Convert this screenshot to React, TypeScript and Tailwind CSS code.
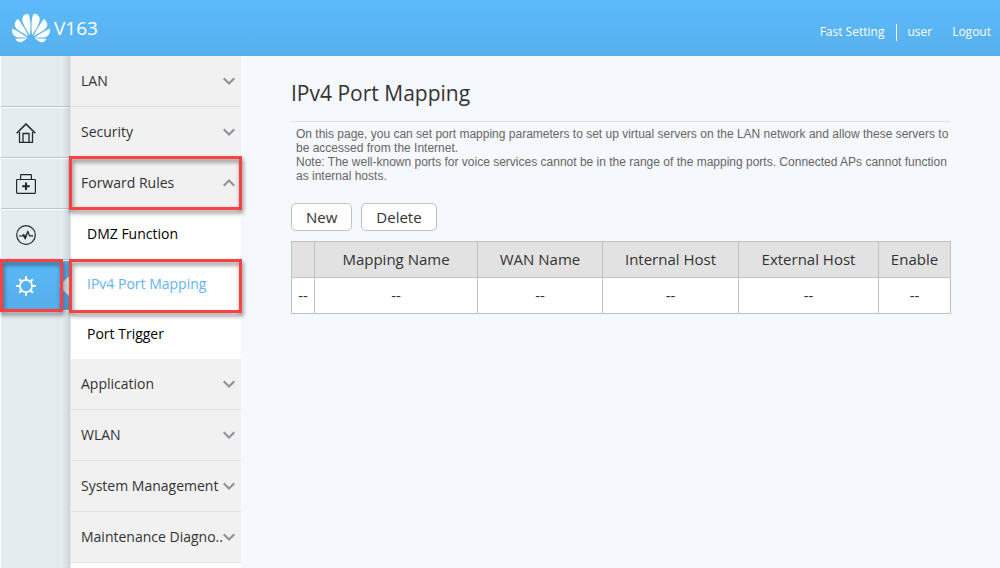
import { useState } from "react";
import type { ReactNode } from "react";
import { SiHuawei } from "react-icons/si";

interface MenuItem {
  label: string;
  marked?: boolean;
  children?: { label: string; marked?: boolean }[];
}

const menu: MenuItem[] = [
  { label: "LAN" },
  { label: "Security" },
  {
    label: "Forward Rules",
    marked: true,
    children: [
      { label: "DMZ Function" },
      { label: "IPv4 Port Mapping", marked: true },
      { label: "Port Trigger" },
    ],
  },
  { label: "Application" },
  { label: "WLAN" },
  { label: "System Management" },
  { label: "Maintenance Diagno.." },
];

const columns = [
  { label: "", width: "w-[23px]" },
  { label: "Mapping Name", width: "w-[163px]" },
  { label: "WAN Name", width: "w-[125px]" },
  { label: "Internal Host", width: "w-[136px]" },
  { label: "External Host", width: "w-[140px]" },
  { label: "Enable", width: "w-[72px]" },
];

const HomeIcon = () => (
  <svg width="20" height="20" viewBox="0 0 20 20" fill="none" stroke="currentColor" strokeWidth="1.3">
    <path d="M.7 10.2 10 1l9.300 9.200" strokeWidth="1.600" />
    <path d="M3.500 9v10.300h13V9M7 19.300v-8.800h6v8.800" />
  </svg>
);

const KitIcon = () => (
  <svg width="20" height="20" viewBox="0 0 20 20" fill="none" stroke="currentColor" strokeWidth="1.2">
    <rect x=".6" y="5.500" width="18.800" height="13.900" rx=".8" />
    <path d="M4.600 5.500V1.300q0-.7.7-.7h9.400q.7 0 .7.700v4.200" />
    <path d="M10 8.500v7.600M6.200 12.300h7.600" strokeWidth="2" />
  </svg>
);

const PulseIcon = () => (
  <svg width="20" height="20" viewBox="0 0 20 20" fill="none" stroke="currentColor" strokeWidth="1.2">
    <circle cx="10" cy="10" r="9.300" />
    <path d="M2.800 11h3.400l1.600-1.500 1.400 3.700 2.600-7 1.700 4.600h3.700" strokeLinejoin="round" />
    <path d="M7.400 10.300l1.800 3 1.600-4.300" strokeWidth="1.500" />
  </svg>
);

const GearIcon = () => (
  <svg width="20" height="20" viewBox="0 0 20 20" fill="none" stroke="currentColor" strokeWidth="1.800">
    <circle cx="10" cy="10" r="6.100" />
    <path
      d="M10 .2v3.600M10 16.200v3.600M.2 10h3.600M16.200 10h3.600M3.200 3.200l2.300 2.300M14.500 14.500l2.300 2.300M3.200 16.800l2.300-2.300M14.500 5.500l2.300-2.300"
      strokeWidth="2"
    />
  </svg>
);

const Chevron = ({ up }: { up: boolean }) => (
  <svg width="12" height="8" viewBox="0 0 12 8" fill="none" stroke="#8c929b" strokeWidth="2" className="shrink-0">
    <path d={up ? "M.7 6.800 6 1.500l5.300 5.300" : "M.7 1.200 6 6.500l5.300-5.300"} />
  </svg>
);

const Mark = ({ className }: { className: string }) => (
  <span
    className={`pointer-events-none absolute z-20 border-3 border-[#fb4141] drop-shadow-[1px_3px_2px_rgba(0,0,0,0.5)] ${className}`}
  />
);

const RailLink = ({ label, children }: { label: string; children: ReactNode }) => (
  <a
    href="#"
    aria-label={label}
    className="flex h-[51px] items-center border-t border-b border-t-white border-b-[#bcc6cd] pl-[15px] text-[#22292d]"
  >
    {children}
  </a>
);

const Header = () => (
  <header className="flex h-14 items-center justify-between bg-gradient-to-b from-[#5cbafb] to-[#57b0ed] pr-[9px] pl-3 text-white">
    <div className="flex items-center gap-1">
      <SiHuawei className="size-[38px]" />
      <span className="text-[19px]">V163</span>
    </div>
    <nav className="flex items-center pt-2 text-xs font-medium">
      <a href="#">Fast Setting</a>
      <span className="ml-3 h-[17px] border-l border-white" />
      <span className="ml-2.5">user</span>
      <a href="#" className="ml-5">
        Logout
      </a>
    </nav>
  </header>
);

const Rail = () => (
  <nav className="relative w-[70px] shrink-0 border-l border-white bg-[#e4ecef]">
    <div className="h-[51px] border-b border-[#bcc6cd]" />
    <RailLink label="Home">
      <HomeIcon />
    </RailLink>
    <RailLink label="Maintain">
      <KitIcon />
    </RailLink>
    <RailLink label="Status">
      <PulseIcon />
    </RailLink>
    <a
      href="#"
      aria-label="Settings"
      aria-current="page"
      className="relative flex h-[51px] items-center border-y border-white bg-gradient-to-b from-[#5ab8f8] to-[#55aeea] pl-[15px] text-white"
    >
      <GearIcon />
      <svg width="12" height="22" viewBox="0 0 12 22" className="absolute right-0 z-10">
        <path d="M12 0v22L1 11z" fill="#dce2e6" />
      </svg>
      <Mark className="-top-0.5 -bottom-0.5 -left-px w-[63px]" />
    </a>
    <div className="pointer-events-none absolute inset-y-0 right-0 w-2 bg-gradient-to-r from-transparent to-black/10" />
  </nav>
);

const SideMenu = () => {
  const [open, setOpen] = useState("Forward Rules");
  const [active, setActive] = useState("IPv4 Port Mapping");

  return (
    <nav className="w-[171px] shrink-0 border-l border-[#e4e4e4] bg-white text-sm">
      <ul>
        {menu.map((item) => (
          <li key={item.label}>
            <button
              type="button"
              aria-expanded={open === item.label}
              onClick={() => setOpen(open === item.label ? "" : item.label)}
              className="relative flex h-[51px] w-full items-center justify-between border-b border-[#e2e2e2] bg-[#f1f1f1] pr-1.5 pl-2.5 text-[#333]"
            >
              <span className="whitespace-nowrap">{item.label}</span>
              <Chevron up={open === item.label} />
              {item.marked && <Mark className="-top-0.5 -right-px -bottom-0.5 -left-0.5" />}
            </button>
            {item.children && open === item.label && (
              <ul>
                {item.children.map((child) => (
                  <li key={child.label} className="relative">
                    <a
                      href="#"
                      onClick={() => setActive(child.label)}
                      className={`flex h-[50px] items-center pl-4 ${
                        active === child.label ? "text-[#63b3f0]" : "text-black"
                      }`}
                    >
                      {child.label}
                    </a>
                    {child.marked && <Mark className="top-0 -right-px -bottom-1 -left-0.5" />}
                  </li>
                ))}
              </ul>
            )}
          </li>
        ))}
      </ul>
    </nav>
  );
};

const App = () => {
  return (
    <div className="flex min-h-screen flex-col bg-[#f5f8fd] font-['Open_Sans','Noto_Sans',sans-serif]">
      <Header />
      <div className="flex flex-1">
        <Rail />
        <SideMenu />
        <main className="min-w-0 flex-1 pr-[49px] pl-[50px] text-[#333]">
          <h1 className="flex h-[66px] items-center border-b border-[#dde1e5] pt-2.5 text-[21px]">
            IPv4 Port Mapping
          </h1>
          <div className="pt-[5px] pl-[5px] font-['Liberation_Sans',Arial,sans-serif] text-xs leading-[14px] text-[#666]">
            <p>
              On this page, you can set port mapping parameters to set up virtual servers on the LAN network and
              allow these servers to be accessed from the Internet.
            </p>
            <p>
              Note: The well-known ports for voice services cannot be in the range of the mapping ports. Connected
              APs cannot function as internal hosts.
            </p>
          </div>
          <div className="mt-5 flex gap-[9px] text-[15px]">
            <button type="button" className="h-7 rounded-[5px] border border-[#c1c1c1] bg-white px-3.5">
              New
            </button>
            <button type="button" className="h-7 rounded-[5px] border border-[#c1c1c1] bg-white px-3.5">
              Delete
            </button>
          </div>
          <table className="mt-2.5 w-full table-fixed border-collapse text-center text-[15px]">
            <thead>
              <tr className="h-9 bg-[#e2e2e2]">
                {columns.map((column) => (
                  <th key={column.label} className={`border border-[#c1c1c1] font-normal ${column.width}`}>
                    {column.label}
                  </th>
                ))}
              </tr>
            </thead>
            <tbody>
              <tr className="h-9 bg-white">
                {columns.map((column) => (
                  <td key={column.label} className="border border-[#c1c1c1]">
                    --
                  </td>
                ))}
              </tr>
            </tbody>
          </table>
        </main>
      </div>
    </div>
  );
};

export default App;
